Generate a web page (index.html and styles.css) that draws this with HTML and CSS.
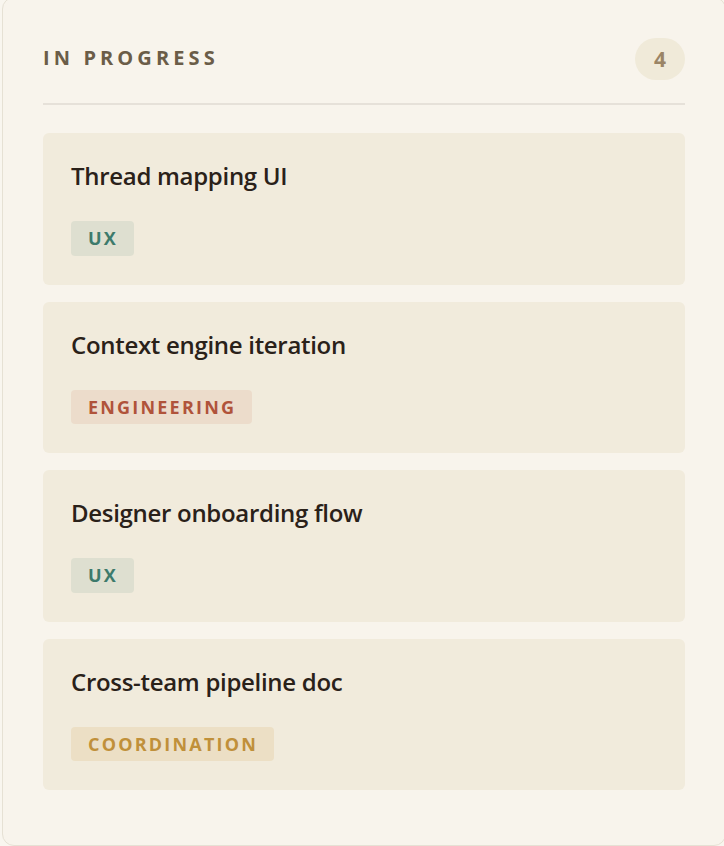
FILE: index.html
```html
<!DOCTYPE html>
<html lang="en">
<head>
<meta charset="utf-8">
<title>In Progress</title>
<link rel="stylesheet" href="styles.css">
</head>
<body>
<section class="panel">
  <header class="panel-head">
    <h2 class="panel-title">IN PROGRESS</h2>
    <span class="count">4</span>
  </header>
  <div class="cards">
    <article class="card">
      <h3 class="card-title">Thread mapping UI</h3>
      <span class="tag tag-ux">UX</span>
    </article>
    <article class="card">
      <h3 class="card-title">Context engine iteration</h3>
      <span class="tag tag-eng">ENGINEERING</span>
    </article>
    <article class="card">
      <h3 class="card-title">Designer onboarding flow</h3>
      <span class="tag tag-ux">UX</span>
    </article>
    <article class="card">
      <h3 class="card-title">Cross-team pipeline doc</h3>
      <span class="tag tag-coord">COORDINATION</span>
    </article>
  </div>
</section>
</body>
</html>
```
FILE: styles.css
```css
* { box-sizing: border-box; }
html, body {
  margin: 0;
  padding: 0;
  height: 846px;
  overflow: hidden;
  background: #f9f6ef;
  font-family: "Open Sans", "Lato", sans-serif;
}
.panel {
  width: 724px;
  height: 849px;
  margin: -3px 0 0 2px;
  padding: 40px 40px 0 40px;
  background: #f8f4ec;
  border: 1px solid #e6e1d4;
  border-radius: 12px;
}
.panel-head {
  display: flex;
  justify-content: space-between;
  align-items: center;
  padding-bottom: 23px;
  border-bottom: 2px solid #e6e1d9;
}
.panel-title {
  margin: -3px 0 0;
  font-size: 20px;
  line-height: 26px;
  font-weight: 700;
  letter-spacing: 4.1px;
  color: #6b5d48;
}
.count {
  display: flex;
  align-items: center;
  justify-content: center;
  width: 50px;
  height: 42px;
  border-radius: 21px;
  background: #f0ead9;
  color: #9b8566;
  font-size: 21px;
  font-weight: 700;
}
.cards {
  display: flex;
  flex-direction: column;
  gap: 17px;
  margin-top: 28px;
}
.card {
  display: flex;
  flex-direction: column;
  align-items: flex-start;
  height: 151.5px;
  padding: 29px 28px 29px;
  background: #f1ebdc;
  border-radius: 6px;
}
.card-title {
  margin: 0 0 31px;
  font-size: 24px;
  line-height: 28px;
  font-weight: 600;
  color: #2a2119;
  letter-spacing: -0.3px;
}
.tag {
  display: inline-flex;
  align-items: center;
  height: 35px;
  padding: 0 16px 0 17px;
  border-radius: 4px;
  font-size: 18px;
  font-weight: 700;
  letter-spacing: 2.2px;
}
.tag-ux { background: #dedfd0; color: #3d7a6b; }
.tag-eng { background: #ecdccb; color: #b0533a; }
.tag-coord { background: #ecdfc5; color: #c0903a; }
```
